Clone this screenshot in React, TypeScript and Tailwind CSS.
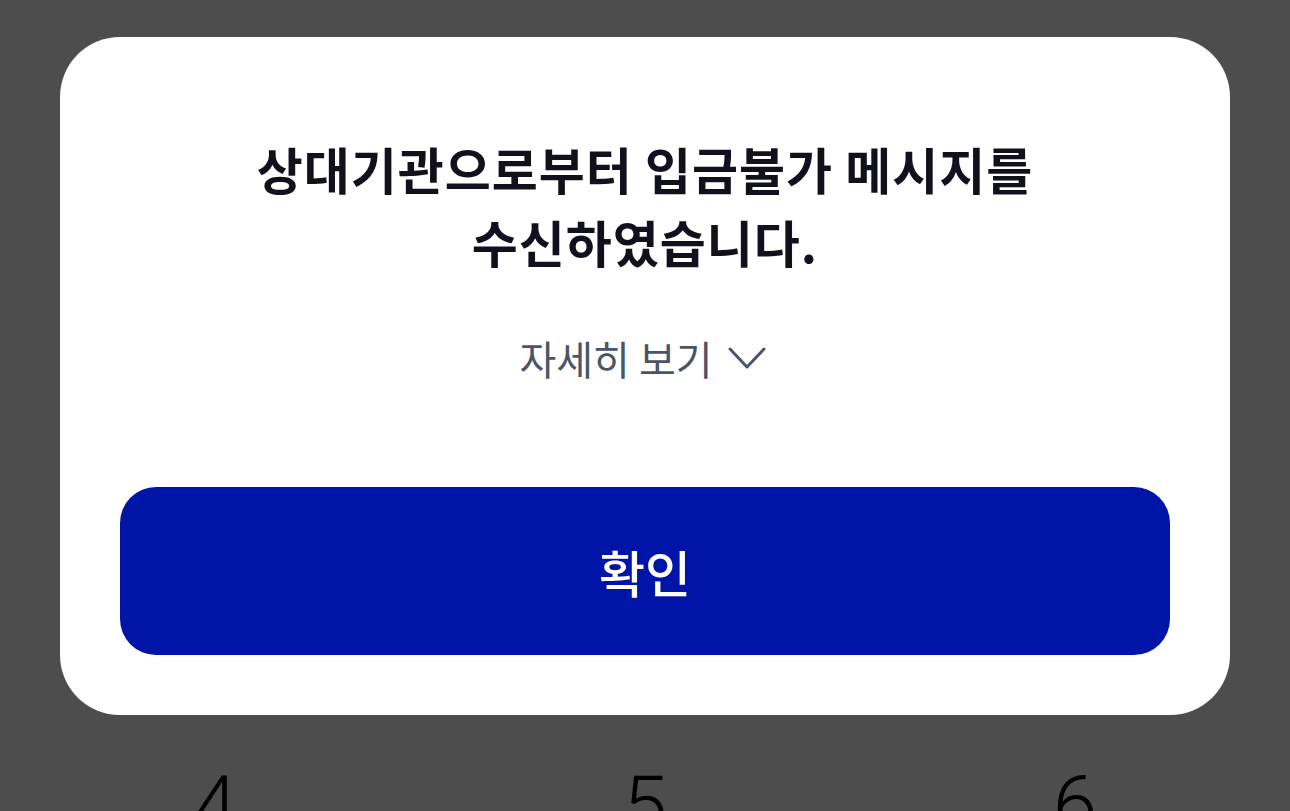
export default function App() {
  return (
    <div
      className="relative h-[811px] w-[1290px] overflow-hidden bg-[#4d4d4d]"
      style={{ fontFamily: '"Noto Sans CJK KR", "Noto Sans", sans-serif' }}
    >
      <div className="flex flex-col items-center px-[60px] pt-[37px]">
        <div className="flex w-full flex-col items-center rounded-[60px] bg-white px-[60px] pb-[60px] pt-[95px]">
          <h1 className="text-center text-[50px] font-bold leading-[73px] tracking-[1px] text-[#10111c]">
            상대기관으로부터 입금불가 메시지를
            <br />
            수신하였습니다.
          </h1>
          <button className="mt-[55px] flex items-center gap-[16px] pr-[4px] text-[40px] leading-[50px] text-[#4b5468]">
            <span>자세히 보기</span>
            <svg width="38" height="24" viewBox="0 0 38 24" fill="none" stroke="currentColor" strokeWidth="3" strokeLinecap="round" strokeLinejoin="round">
              <path d="M2 3l17 18L36 3" />
            </svg>
          </button>
          <button className="mt-[104px] flex h-[168px] w-full items-center justify-center rounded-[36px] bg-[#0015a8] text-[50px] font-medium text-white">
            확인
          </button>
        </div>
      </div>
      <div className="mt-[50px] grid grid-cols-3">
        {['4', '5', '6'].map((d) => (
          <div key={d} className="text-center text-[80px] font-light leading-[80px] text-black" style={{ fontFamily: '"Roboto", sans-serif' }}>
            {d}
          </div>
        ))}
      </div>
    </div>
  );
}
